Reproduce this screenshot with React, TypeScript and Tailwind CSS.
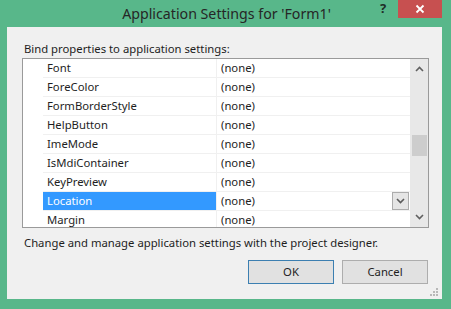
import React from "react"

const rows = [
  "Font",
  "ForeColor",
  "FormBorderStyle",
  "HelpButton",
  "ImeMode",
  "IsMdiContainer",
  "KeyPreview",
  "Location",
  "Margin",
]

function ChevronUp() {
  return (
    <svg width="9" height="6" viewBox="0 0 9 6">
      <path d="M1 5 L4.5 1.5 L8 5" fill="none" stroke="#606060" strokeWidth="1.6" />
    </svg>
  )
}

function ChevronDown({ color = "#606060" }: { color?: string }) {
  return (
    <svg width="9" height="6" viewBox="0 0 9 6">
      <path d="M1 1 L4.5 4.5 L8 1" fill="none" stroke={color} strokeWidth="1.6" />
    </svg>
  )
}

export default function App() {
  return (
    <div
      className="flex h-[309px] w-[451px] flex-col overflow-hidden bg-[#58b78a] text-[#1e1e1e]"
      style={{ fontFamily: '"Noto Sans", "Open Sans", sans-serif' }}
    >
      {/* Title bar */}
      <div className="flex h-[27px] shrink-0 items-start">
        <div className="flex h-[27px] flex-1 items-center justify-center pl-[73px] text-[14.2px] text-[#262626]">
          Application Settings for 'Form1'
        </div>
        <div className="mr-[4px] mt-[1px] w-[14px] text-[13px] font-bold leading-[14px] text-[#1f2d27]">?</div>
        <div className="mr-[9px] flex h-[18px] w-[44px] items-center justify-center bg-[#c75050]">
          <svg width="10" height="10" viewBox="0 0 10 10">
            <path d="M1.5 1.5 L8.5 8.5 M8.5 1.5 L1.5 8.5" stroke="#fff" strokeWidth="1.8" />
          </svg>
        </div>
      </div>

      {/* Client area */}
      <div className="ml-[7px] flex h-[272px] w-[435px] shrink-0 flex-col bg-[#f0f0f0] pl-[15px] pr-[13px] text-[11.3px]">
        <div className="mt-[13px] h-[17px] pl-[2px] leading-[17px]">Bind properties to application settings:</div>

        {/* Property grid */}
        <div className="mt-[1px] flex h-[170px] w-[407px] border border-[#9a9a9a] bg-white">
          <div className="w-[20px] shrink-0" />
          <div className="flex h-[168px] flex-col overflow-hidden">
            {rows.map((name) => {
              const sel = name === "Location"
              return (
                <div key={name} className="flex h-[19px] shrink-0 leading-[18px]">
                  <div
                    className={`h-[19px] w-[174px] shrink-0 border-b border-r pl-[4px] ${
                      sel ? "border-b-[#f0f0f0] border-r-[#f0f0f0] bg-[#3399ff] text-white" : "border-[#f0f0f0]"
                    }`}
                  >
                    {name}
                  </div>
                  <div className="flex h-[19px] w-[193px] shrink-0 items-start justify-between border-b border-[#f0f0f0] pl-[4px]">
                    <span>(none)</span>
                    {sel && (
                      <div className="mr-[1px] flex h-[18px] w-[17px] items-center justify-center border border-[#acacac] bg-[#e5e5e5]">
                        <ChevronDown color="#5a5a5a" />
                      </div>
                    )}
                  </div>
                </div>
              )
            })}
          </div>
          {/* Scrollbar */}
          <div className="flex w-[18px] shrink-0 flex-col items-center bg-[#e8e8e8]">
            <div className="flex h-[17px] w-full items-center justify-center pt-[2px]">
              <ChevronUp />
            </div>
            <div className="mt-[59px] h-[21px] w-[15px] bg-[#cdcdcd]" />
            <div className="flex-1" />
            <div className="flex h-[17px] w-full items-center justify-center pb-[3px]">
              <ChevronDown />
            </div>
          </div>
        </div>

        <div className="mt-[6px] h-[17px] pl-[2px] leading-[17px]">
          Change and manage application settings with the project designer.
        </div>

        <div className="mt-[9px] flex justify-end gap-[8px] pr-[1px]">
          <button className="h-[24px] w-[86px] border border-[#3c7fb1] bg-[#e1e1e1]">OK</button>
          <button className="h-[24px] w-[86px] border border-[#adadad] bg-[#e1e1e1]">Cancel</button>
        </div>

        <div className="mt-auto mb-[3px] -mr-[9px] flex justify-end">
          <svg width="9" height="9" viewBox="0 0 9 9">
            {[
              [7, 1],
              [4, 4],
              [7, 4],
              [1, 7],
              [4, 7],
              [7, 7],
            ].map(([x, y], i) => (
              <rect key={i} x={x} y={y} width="2" height="2" fill="#b8b8b8" />
            ))}
          </svg>
        </div>
      </div>
    </div>
  )
}
